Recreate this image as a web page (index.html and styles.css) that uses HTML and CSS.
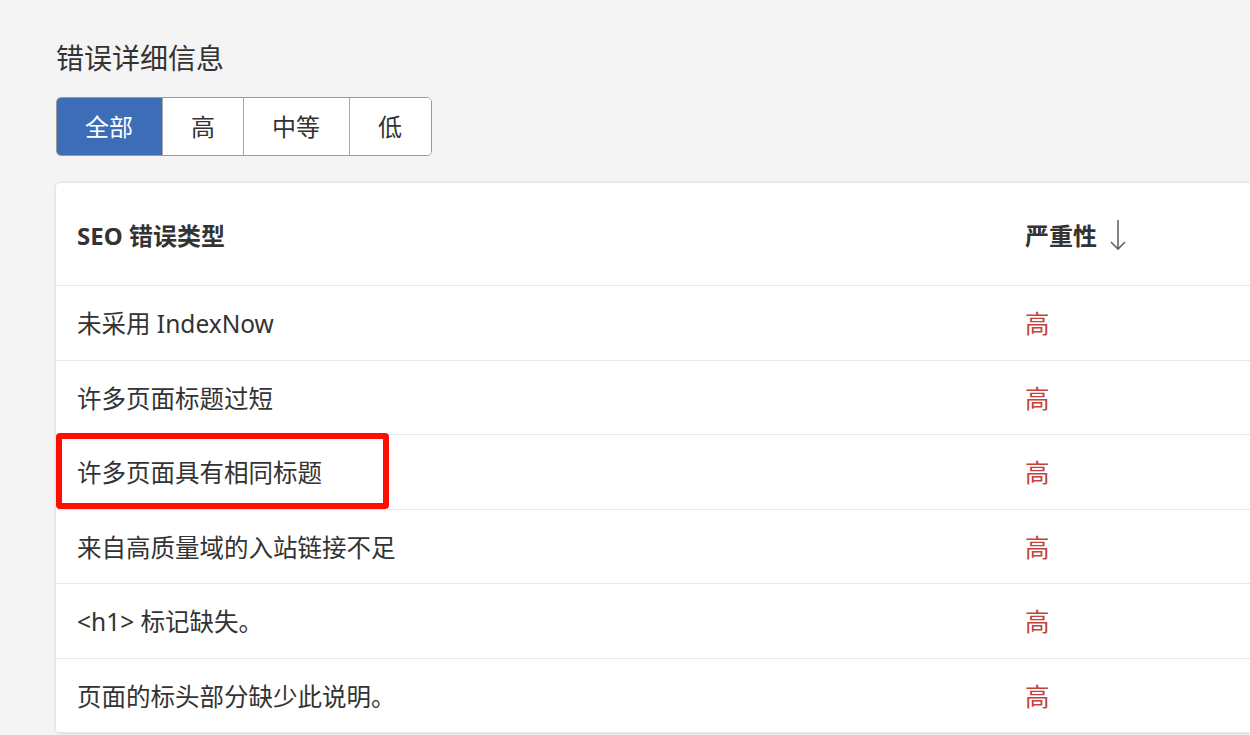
FILE: index.html
```html
<!DOCTYPE html>
<html lang="zh-CN">
<head>
<meta charset="utf-8">
<title>错误详细信息</title>
<link rel="stylesheet" href="styles.css">
</head>
<body>
<main class="page">
  <h2 class="title">错误详细信息</h2>
  <div class="filters">
    <button class="filter active">全部</button>
    <button class="filter">高</button>
    <button class="filter mid">中等</button>
    <button class="filter">低</button>
  </div>
  <section class="card">
    <div class="row head">
      <div class="cell">SEO 错误类型</div>
      <div class="cell sev-head">严重性
        <svg class="sort" width="18" height="32" viewBox="0 0 18 32" aria-hidden="true">
          <path d="M9 1 V30 M2 23 L9 30 L16 23" fill="none" stroke="#666" stroke-width="1.6"/>
        </svg>
      </div>
    </div>
    <div class="row"><div class="cell">未采用 IndexNow</div><div class="cell high">高</div></div>
    <div class="row"><div class="cell">许多页面标题过短</div><div class="cell high">高</div></div>
    <div class="row marked"><div class="cell">许多页面具有相同标题</div><div class="cell high">高</div><span class="highlight"></span></div>
    <div class="row"><div class="cell">来自高质量域的入站链接不足</div><div class="cell high">高</div></div>
    <div class="row"><div class="cell">&lt;h1&gt; 标记缺失。</div><div class="cell high">高</div></div>
    <div class="row"><div class="cell">页面的标头部分缺少此说明。</div><div class="cell high">高</div></div>
  </section>
</main>
</body>
</html>
```

FILE: styles.css
```css
html, body {
  margin: 0;
  padding: 0;
  background: #f4f4f4;
  overflow: hidden;
  height: 735px;
}
.page {
  padding: 40px 0 0 56px;
  font-family: "Noto Sans", "Noto Sans CJK SC", sans-serif;
  color: #333;
}
.title {
  margin: 0;
  font-size: 28px;
  font-weight: 400;
  line-height: 37px;
  color: #333;
}
.filters {
  display: inline-flex;
  margin-top: 20px;
  border: 1px solid #9a9a9a;
  border-radius: 5px;
  overflow: hidden;
  background: #fff;
}
.filter {
  font-family: inherit;
  font-size: 24px;
  line-height: 57px;
  height: 57px;
  padding: 0 28px;
  border: 0;
  border-left: 1px solid #a8a8a8;
  background: #fff;
  color: #333;
  margin: 0;
}
.filter:first-child { border-left: 0; }
.filter.mid { padding: 0 29px 0 28px; }
.filter:last-child { padding: 0 29px 0 28px; }
.filter.active {
  background: #3d6db7;
  color: #fff;
  padding: 0 29px 0 28px;
}
.card {
  margin-top: 27px;
  width: 1194px;
  background: #fff;
  border-radius: 4px 0 0 4px;
  box-shadow: 0 0 3px rgba(0, 0, 0, 0.18);
}
.row {
  position: relative;
  display: grid;
  grid-template-columns: 948px 1fr;
  align-items: center;
  height: 74.5px;
  box-sizing: border-box;
  border-bottom: 1px solid #e8e8e8;
  font-size: 24.5px;
}
.row.head {
  height: 103px;
  font-weight: 700;
  font-size: 24px;
}
.cell {
  padding-left: 21px;
  white-space: nowrap;
}
.sev-head {
  display: flex;
  align-items: center;
  gap: 12px;
}
.sort { margin-top: 1px; }
.high { color: #c4423a; }
.highlight {
  position: absolute;
  left: 0;
  top: -2px;
  width: 333px;
  height: 76px;
  box-sizing: border-box;
  border: 6px solid #ff0d00;
  border-radius: 4px;
  pointer-events: none;
}
```
